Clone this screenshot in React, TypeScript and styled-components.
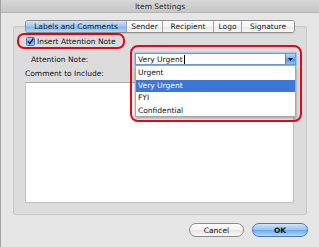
import React from "react";
import styled, { createGlobalStyle } from "styled-components";

const GlobalStyle = createGlobalStyle`
  html, body { margin: 0; padding: 0; background: #e6e6e6; }
  body {
    font-family: "DejaVu Sans", "Liberation Sans", sans-serif;
    font-size: 7.5px;
    color: #111;
  }
`;

const RED = "#e3061c";

const Window = styled.div`
  width: 319px;
  height: 247px;
  box-sizing: border-box;
  border-left: 1px solid #a3a3a3;
  background: #e6e6e6;
  overflow: hidden;
  display: flex;
  flex-direction: column;
`;

const TitleBar = styled.div`
  height: 12px;
  flex-shrink: 0;
  border-bottom: 1px solid #b4b4b4;
  background: linear-gradient(#d7d7d7, #c6c6c6);
  display: flex;
  align-items: center;
  justify-content: center;
  color: #2a2a2a;
`;

const TabRow = styled.div`
  position: relative;
  z-index: 1;
  display: flex;
  justify-content: center;
  margin: 7px 12px -7px 12px;
`;

const Segmented = styled.div`
  display: flex;
  height: 13px;
  box-sizing: border-box;
  border: 1px solid #8e8e8e;
  border-radius: 3px;
  overflow: hidden;
  box-shadow: 0 1px 0 rgba(0, 0, 0, 0.08);
`;

const Tab = styled.div<{ $w: number; $active?: boolean }>`
  width: ${(p) => p.$w}px;
  box-sizing: border-box;
  line-height: 11px;
  text-align: center;
  color: #1a1a1a;
  white-space: nowrap;
  border-left: 1px solid #a2a2a2;
  background: ${(p) =>
    p.$active
      ? "linear-gradient(#cfe4fa, #9cc6f1 50%, #7db4ee 51%, #b5d7f7)"
      : "linear-gradient(#ffffff, #f4f4f4 50%, #e9e9e9 51%, #f7f7f7)"};
  &:first-child { border-left: none; }
`;

const GroupBox = styled.div`
  margin: 0 12px;
  height: 189px;
  box-sizing: border-box;
  border: 1px solid #c8c8c8;
  border-radius: 2px;
  background: #dcdcdc;
  display: flex;
  flex-direction: column;
  align-items: flex-start;
`;

const CheckRing = styled.div`
  margin: 6px 0 0 3px;
  width: 108px;
  height: 16px;
  box-sizing: border-box;
  border: 2px solid ${RED};
  border-radius: 7px;
  display: flex;
  align-items: center;
  padding-left: 7px;
  gap: 2px;
  white-space: nowrap;
`;

const AttentionRow = styled.div`
  margin-top: 4px;
  height: 12px;
  display: flex;
  align-items: center;
`;

const FieldLabel = styled.div`
  width: 121px;
  box-sizing: border-box;
  padding-left: 17px;
  white-space: nowrap;
`;

const ComboWrap = styled.div`
  position: relative;
  width: 161px;
  height: 12px;
`;

const ComboField = styled.div`
  height: 12px;
  box-sizing: border-box;
  border: 1px solid #6f9ad6;
  box-shadow: 0 0 1px 1px #a9c6ee;
  background: #fff;
  display: flex;
  align-items: center;
  padding-left: 2px;
`;

const Caret = styled.span`
  display: inline-block;
  width: 1px;
  height: 9px;
  background: #000;
  margin-left: 1px;
`;

const ArrowButton = styled.div`
  margin-left: auto;
  width: 9px;
  height: 10px;
  background: linear-gradient(#b9d8f7, #6ea9ea 50%, #4e92e3 51%, #90c2f3);
  border-left: 1px solid #5a86c4;
  display: flex;
  align-items: center;
  justify-content: center;
`;

const Ring = styled.div`
  position: absolute;
  left: -5px;
  top: -8px;
  width: 172px;
  height: 77px;
  box-sizing: border-box;
  border: 2px solid ${RED};
  border-radius: 8px;
  pointer-events: none;
`;

const PopupList = styled.div`
  position: absolute;
  top: 12px;
  left: 0;
  width: 161px;
  height: 52px;
  box-sizing: border-box;
  background: #fff;
  border: 1px solid #a8a8a8;
  box-shadow: 0 2px 3px rgba(0, 0, 0, 0.35);
  padding-top: 1px;
`;

const ListItem = styled.div<{ $selected?: boolean }>`
  height: 12.5px;
  line-height: 12.5px;
  padding-left: 2px;
  color: ${(p) => (p.$selected ? "#fff" : "#111")};
  background: ${(p) => (p.$selected ? "#3c77d8" : "transparent")};
`;

const CommentLabel = styled.div`
  margin: 4px 0 4px 11px;
  line-height: 9px;
  white-space: nowrap;
`;

const TextArea = styled.div`
  margin-left: 11px;
  width: 269px;
  height: 121px;
  box-sizing: border-box;
  background: #fff;
  border: 1px solid #c2c2c2;
  border-top-color: #a9a9a9;
`;

const Footer = styled.div`
  display: flex;
  justify-content: flex-end;
  gap: 8px;
  margin: 8px 11px 0 0;
`;

const PushButton = styled.div<{ $w: number; $primary?: boolean }>`
  width: ${(p) => p.$w}px;
  height: 14px;
  box-sizing: border-box;
  border-radius: 7px;
  border: 1px solid ${(p) => (p.$primary ? "#4f78b5" : "#8a8a8a")};
  background: ${(p) =>
    p.$primary
      ? "linear-gradient(#cfe5fb, #93c3f3 50%, #6aaaf0 51%, #b3d9fb)"
      : "linear-gradient(#ffffff, #f2f2f2 50%, #e4e4e4 51%, #f8f8f8)"};
  display: flex;
  align-items: center;
  justify-content: center;
  color: #111;
  font-weight: ${(p) => (p.$primary ? 700 : 400)};
`;

const CheckIcon = () => (
  <svg width="9" height="9" viewBox="0 0 9 9">
    <defs>
      <linearGradient id="cb" x1="0" y1="0" x2="0" y2="1">
        <stop offset="0" stopColor="#bcdaf8" />
        <stop offset="0.5" stopColor="#6fa9ea" />
        <stop offset="1" stopColor="#a5cdf5" />
      </linearGradient>
    </defs>
    <rect x="0.5" y="0.5" width="8" height="8" rx="1" fill="url(#cb)" stroke="#4c76b0" />
    <path d="M2 4.4 L3.8 6.6 L7.4 1.4" fill="none" stroke="#0d1b35" strokeWidth="1.4" />
  </svg>
);

const DownArrow = () => (
  <svg width="5" height="3" viewBox="0 0 5 3">
    <path d="M0 0 H5 L2.5 3 Z" fill="#0b1a33" />
  </svg>
);

const tabs = [
  { label: "Labels and Comments", w: 100, active: true },
  { label: "Sender", w: 36 },
  { label: "Recipient", w: 51 },
  { label: "Logo", w: 28 },
  { label: "Signature", w: 53 },
];

const options = ["Urgent", "Very Urgent", "FYI", "Confidential"];

export default function App() {
  return (
    <>
      <GlobalStyle />
      <Window>
        <TitleBar>Item Settings</TitleBar>
        <TabRow>
          <Segmented>
            {tabs.map((t) => (
              <Tab key={t.label} $w={t.w} $active={t.active}>
                {t.label}
              </Tab>
            ))}
          </Segmented>
        </TabRow>
        <GroupBox>
          <CheckRing>
            <CheckIcon />
            <span>Insert Attention Note</span>
          </CheckRing>
          <AttentionRow>
            <FieldLabel>Attention Note:</FieldLabel>
            <ComboWrap>
              <ComboField>
                <span>Very Urgent</span>
                <Caret />
                <ArrowButton>
                  <DownArrow />
                </ArrowButton>
              </ComboField>
              <PopupList>
                {options.map((o) => (
                  <ListItem key={o} $selected={o === "Very Urgent"}>
                    {o}
                  </ListItem>
                ))}
              </PopupList>
              <Ring />
            </ComboWrap>
          </AttentionRow>
          <CommentLabel>Comment to Include:</CommentLabel>
          <TextArea />
        </GroupBox>
        <Footer>
          <PushButton $w={55}>Cancel</PushButton>
          <PushButton $w={56} $primary>
            OK
          </PushButton>
        </Footer>
      </Window>
    </>
  );
}
